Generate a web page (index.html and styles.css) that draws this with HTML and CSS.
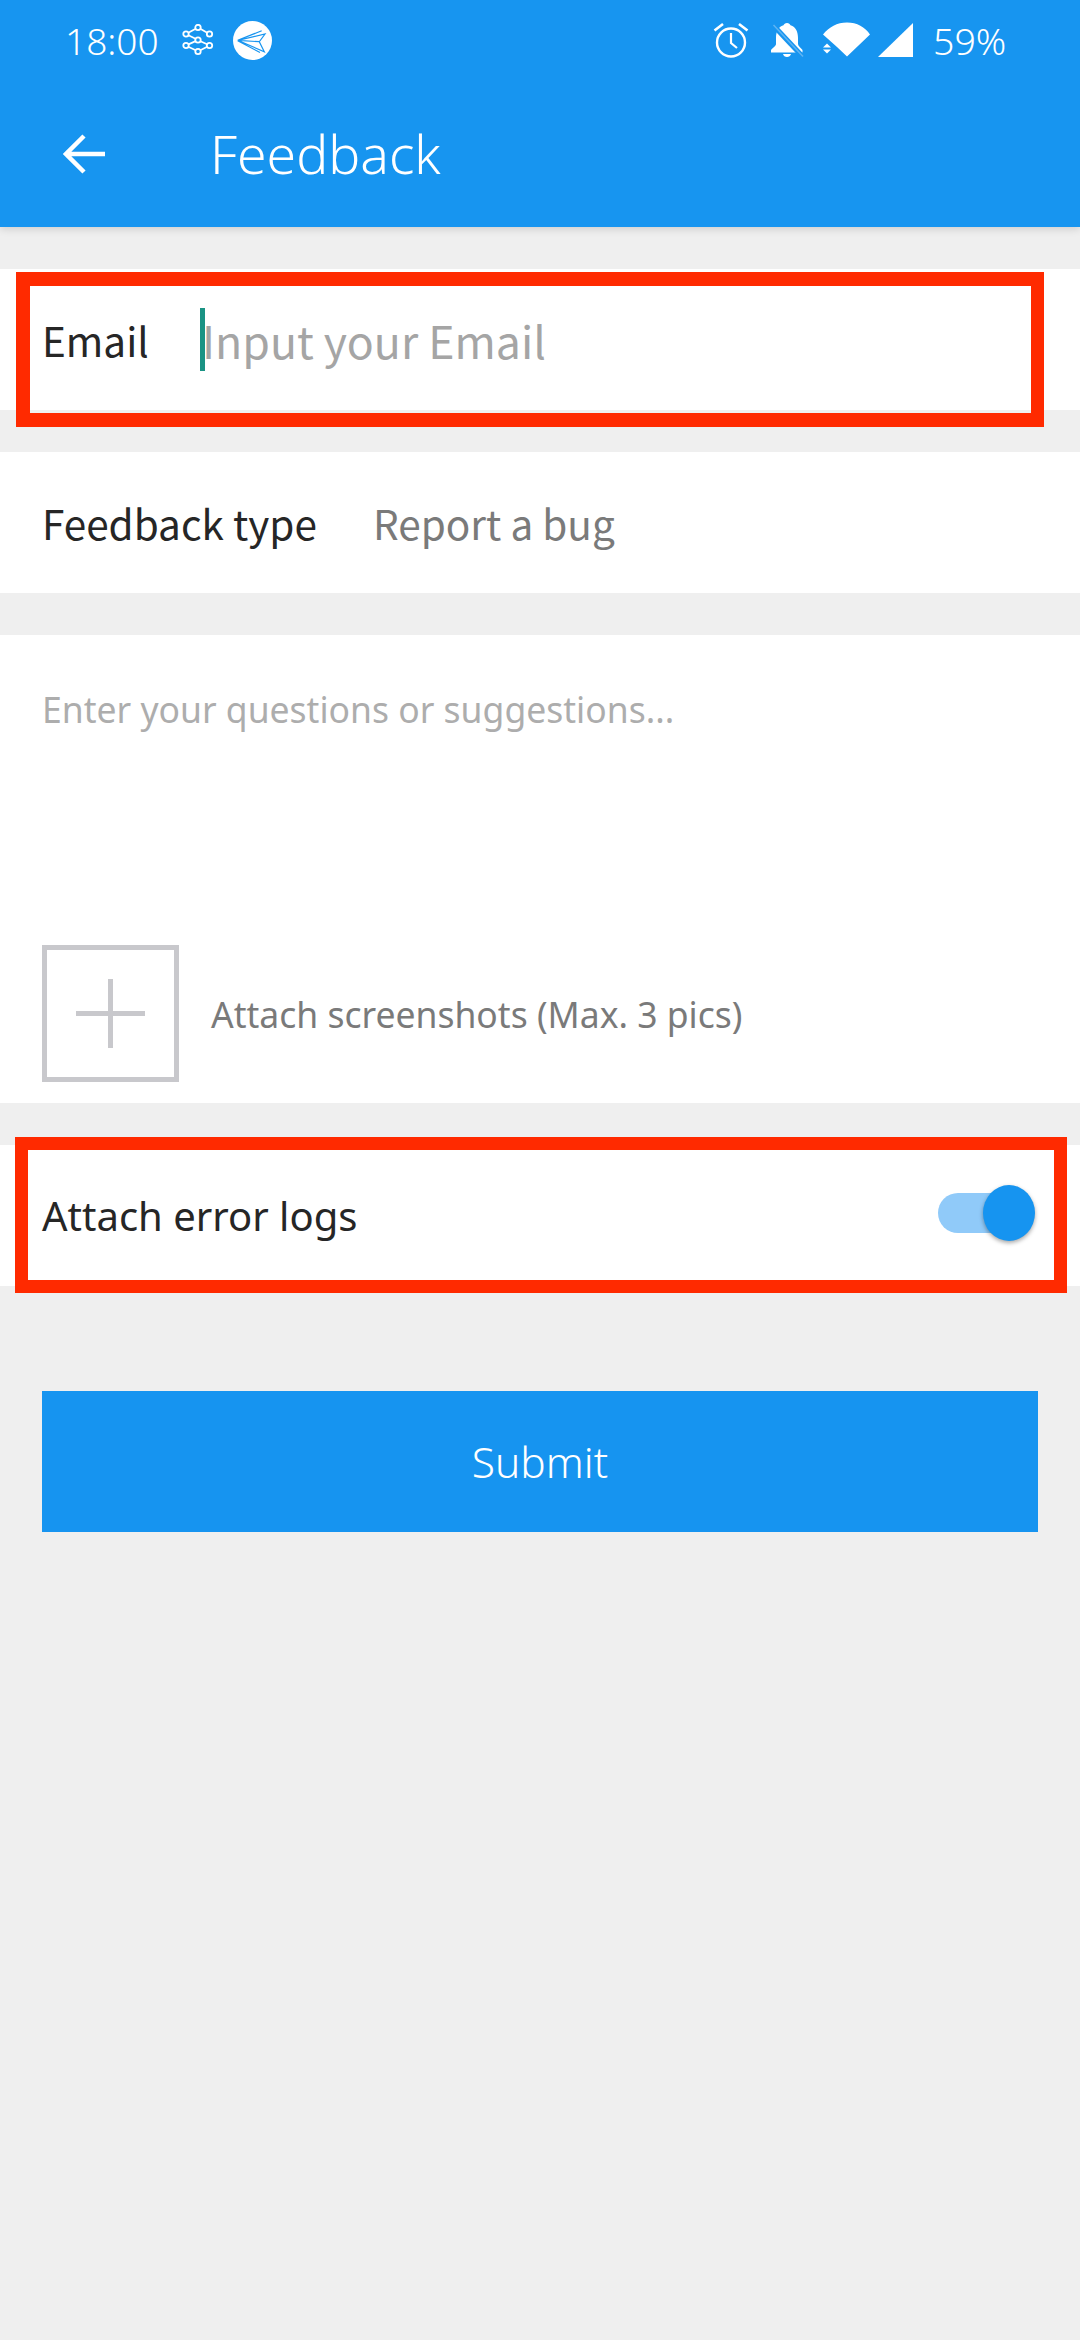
FILE: index.html
```html
<!DOCTYPE html>
<html lang="en">
<head>
<meta charset="utf-8">
<title>Feedback</title>
<link rel="stylesheet" href="styles.css">
</head>
<body>
<div class="screen">
  <header class="appbar">
    <div class="status">
      <span class="time">18:00</span>
      <svg class="ic-net" viewBox="0 0 32 32" fill="none" stroke="#fff" stroke-width="1.800">
        <circle cx="16" cy="3.500" r="2.700"/><circle cx="16" cy="16" r="2.700"/><circle cx="16" cy="27.500" r="2.700"/>
        <circle cx="4" cy="10" r="2.700"/><circle cx="27.500" cy="10" r="2.700"/><circle cx="4" cy="21.500" r="2.700"/><circle cx="27.500" cy="21.500" r="2.700"/>
        <path d="M6.300 8.700 13.700 4.800M18.300 4.800 25.200 8.700M6.400 11.200 13.600 14.800M18.400 17.200 25.100 20.300M13.600 17.200 6.400 20.300M6.300 22.800 13.700 26.200M18.300 26.200 25.200 22.800"/>
      </svg>
      <svg class="ic-send" viewBox="0 0 39 39">
        <circle cx="19.500" cy="19.500" r="19.500" fill="#fff"/>
        <path d="M4.700 19.300 28.700 9.700M4.700 19.300 32 13 26.300 20.700 31.300 30.700 4.700 19.300 26.300 20.700M4.700 19.800 27 31.500" stroke="#1795f0" stroke-width="1.200" fill="none"/>
      </svg>
      <span class="status-gap"></span>
      <svg class="ic-alarm" viewBox="0 0 36 36" fill="none" stroke="#fff">
        <circle cx="18" cy="20.500" r="14" stroke-width="2.400"/>
        <path d="M18 11v10l6 5" stroke-width="2.200"/>
        <path d="M1.500 8.500 10 2M34.500 8.500 26 2" stroke-width="2.600"/>
      </svg>
      <svg class="ic-bell" viewBox="0 0 36 36">
        <path fill="#fff" d="M18 1c1.800 0 3 1 3.500 2.300C27 5 29 10 29 16v6c0 2 3 4 4.500 6v2.500H2V28c1.500-2 5-4 5-6v-6c0-6 2-11 7.500-12.700C15 2 16.200 1 18 1z"/>
        <path fill="#fff" d="M14 32h8c-.5 2-2 3-4 3s-3.500-1-4-3z"/>
        <path d="M3 2 34 35" stroke="#1795f0" stroke-width="5"/>
        <path d="M4.500 3 34 34.500" stroke="#5fb4f3" stroke-width="1.500"/>
      </svg>
      <svg class="ic-wifi" viewBox="0 0 48 36">
        <path fill="#fff" d="M0 12.500C6 5 14 .5 24 .5S42 5 47 12.500L24 34.500 14 25z"/>
        <path fill="#fff" d="M0 25.500h8l-4-4zM0 27.500h8l-4 4z"/>
      </svg>
      <svg class="ic-signal" viewBox="0 0 35 36"><path fill="#fff" d="M35 1v34H0z"/></svg>
      <span class="battery">59%</span>
    </div>
    <div class="toolbar">
      <svg class="ic-back" viewBox="0 0 42 40" fill="none" stroke="#fff" stroke-width="4.500">
        <path d="M42 20H3M21 2 3 20l18 18"/>
      </svg>
      <h1 class="title">Feedback</h1>
    </div>
  </header>

  <main class="form">
    <section class="row">
      <span class="label label-email cjk">Email</span>
      <span class="caret"></span>
      <span class="placeholder cjk">Input your Email</span>
    </section>
    <section class="row">
      <span class="label label-wide cjk">Feedback type</span>
      <span class="value cjk">Report a bug</span>
    </section>
    <section class="message">
      <p class="hint">Enter your questions or suggestions...</p>
      <div class="attach">
        <div class="addbox"><span class="plus"></span></div>
        <span class="attach-text">Attach screenshots (Max. 3 pics)</span>
      </div>
    </section>
    <section class="row row-between">
      <span class="label">Attach error logs</span>
      <span class="switch"><span class="thumb"></span></span>
    </section>
    <button class="submit">Submit</button>
  </main>

  <div class="mark mark-email"></div>
  <div class="mark mark-logs"></div>
</div>
</body>
</html>
```
FILE: styles.css
```css
* { box-sizing: border-box; }
html, body { margin: 0; padding: 0; }
body { background: #efefef; font-family: "Noto Sans", "Open Sans", sans-serif; }
.screen { position: relative; width: 1080px; height: 2340px; overflow: hidden; background: #efefef; }

.appbar { height: 227px; background: #1795f0; color: #fff; box-shadow: 0 2px 8px rgba(0,0,0,.14); position: relative; }
.status { display: flex; align-items: center; height: 80px; padding-left: 65px; }
.time { font-size: 37px; width: 117px; font-weight: 300; }
.ic-net { width: 32px; height: 32px; margin-right: 19px; }
.ic-send { width: 39px; height: 39px; }
.status-gap { width: 441px; }
.ic-alarm { width: 36px; height: 36px; margin-right: 20px; }
.ic-bell { width: 36px; height: 36px; margin-right: 18px; }
.ic-wifi { width: 48px; height: 36px; margin-right: 7px; }
.ic-signal { width: 35px; height: 36px; margin-right: 20px; }
.battery { font-size: 37.500px; font-weight: 300; }

.toolbar { display: flex; align-items: center; height: 147px; padding-left: 63px; }
.ic-back { width: 42px; height: 40px; margin-right: 105px; }
.title { margin: 0; font-size: 53.500px; font-weight: 300; }

.form { padding-top: 42px; display: flex; flex-direction: column; }
.row { display: flex; align-items: center; height: 141px; background: #fff; padding: 0 42px; margin-bottom: 42px; }
.row-between { justify-content: space-between; margin-bottom: 0; padding-right: 70px; }
.cjk { font-family: "Noto Sans CJK SC", "Noto Sans", sans-serif; }
.label { font-size: 40px; color: #262626; }
.label.cjk { font-size: 40.500px; }
.label-email { width: 158px; }
.caret { width: 5px; height: 63px; background: #1a9384; flex: none; }
.placeholder { font-size: 44.600px; color: #a5a5a5; margin-left: -3px; }
.label-wide { width: 331px; }
.value { font-size: 40.500px; color: #7a7a7a; }

.message { height: 468px; background: #fff; margin-bottom: 42px; padding: 0 42px; display: flex; flex-direction: column; }
.hint { margin: 0; padding-top: 50px; font-size: 35.500px; line-height: 48px; color: #adadad; height: 310px; }
.attach { display: flex; align-items: center; }
.addbox { width: 137px; height: 137px; border: 5px solid #c8c8cc; display: flex; align-items: center; justify-content: center; margin-right: 32px; }
.plus { position: relative; width: 69px; height: 5px; background: #c8c8cc; }
.plus::after { content: ""; position: absolute; left: 32px; top: -32px; width: 5px; height: 69px; background: #c8c8cc; }
.attach-text { font-size: 35.500px; color: #7a7a7a; }

.switch { position: relative; display: block; width: 72px; height: 40px; border-radius: 20px; background: #90caf9; margin-bottom: 5px; }
.thumb { position: absolute; right: -25px; top: -8px; width: 52px; height: 56px; border-radius: 50%; background: #1694f0; box-shadow: 0 2px 4px rgba(0,0,0,.35); }

.submit { display: block; margin: 105px 42px 0; width: 996px; height: 141px; border: 0; background: #1694f0; color: #fff; font: 300 42.500px "Noto Sans", sans-serif; }

.mark { position: absolute; border: solid #ff2a00; }
.mark-email { left: 16px; top: 272px; width: 1028px; height: 155px; border-width: 14px 13px 14px 14px; }
.mark-logs { left: 15px; top: 1137px; width: 1052px; height: 156px; border-width: 13px; }
```
